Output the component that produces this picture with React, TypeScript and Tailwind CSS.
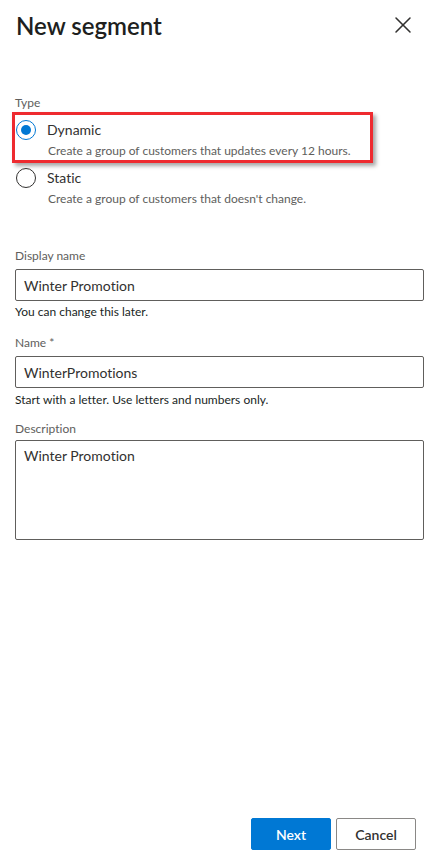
import { X } from "lucide-react";

const font = { fontFamily: "Lato, 'Open Sans', sans-serif" };

function Radio({ checked }: { checked?: boolean }) {
  return (
    <span
      className={`flex h-5 w-5 shrink-0 items-center justify-center rounded-full border ${
        checked ? "border-[#0078d4]" : "border-[#323130]"
      }`}
    >
      {checked && <span className="h-[10px] w-[10px] rounded-full bg-[#0078d4]" />}
    </span>
  );
}

function Option({ label, desc, checked }: { label: string; desc: string; checked?: boolean }) {
  return (
    <div>
      <div className="flex h-5 items-center gap-[11px]">
        <Radio checked={checked} />
        <span className="text-[14px] leading-5 text-[#323130]">{label}</span>
      </div>
      <p className="mt-[3px] whitespace-nowrap pl-[32px] text-[12px] leading-4 text-[#605e5c]">{desc}</p>
    </div>
  );
}

export default function App() {
  return (
    <div className="flex h-[862px] w-[445px] flex-col bg-white [font-variant-ligatures:none]" style={font}>
      <div className="flex h-[52px] items-start justify-between pl-4 pr-[28px] pt-[10px]">
        <h1 className="text-[24px] font-semibold leading-8 text-[#201f1e]">New segment</h1>
        <X className="mt-[1px] h-[28px] w-[28px] text-[#323130]" strokeWidth={1.3} />
      </div>

      <div className="flex-1 pl-[15px] pr-[21px]">
        <p className="mt-[43px] text-[12px] leading-4 text-[#605e5c]">Type</p>

        <div className="mt-[1px] w-[361px] -ml-[3px] border-[3px] border-[#ee2a2f] pb-[1px] pl-[1px] pt-[5px] shadow-[3px_3px_4px_rgba(0,0,0,0.35)]">
          <Option checked label="Dynamic" desc="Create a group of customers that updates every 12 hours." />
        </div>
        <div className="mt-[5px] pl-[1px]">
          <Option label="Static" desc="Create a group of customers that doesn't change." />
        </div>

        <label className="mt-[41px] block text-[12px] leading-4 text-[#605e5c]">Display name</label>
        <div className="mt-[5px] flex h-8 items-center rounded-[2px] border border-[#605e5c] px-2 text-[14px] text-[#323130]">
          Winter Promotion
        </div>
        <p className="mt-[3px] text-[12px] leading-4 text-[#201f1e]">You can change this later.</p>

        <label className="mt-[15px] block text-[12px] leading-4 text-[#605e5c]">Name *</label>
        <div className="mt-[5px] flex h-8 items-center rounded-[2px] border border-[#605e5c] px-2 text-[14px] text-[#323130]">
          WinterPromotions
        </div>
        <p className="mt-[4px] text-[12px] leading-4 text-[#201f1e]">
          Start with a letter. Use letters and numbers only.
        </p>

        <label className="mt-[13px] block text-[12px] leading-4 text-[#605e5c]">Description</label>
        <div className="mt-[3px] h-[100px] rounded-[2px] border border-[#605e5c] px-2 pt-[5px] text-[14px] leading-5 text-[#323130]">
          Winter Promotion
        </div>
      </div>

      <div className="flex justify-end gap-[5px] pb-[12px] pr-[29px]">
        <button className="h-8 w-[80px] rounded-[2px] border border-[#0078d4] bg-[#0078d4] text-[14px] font-semibold text-white">
          Next
        </button>
        <button className="h-8 w-[80px] rounded-[2px] border border-[#8a8886] bg-white text-[14px] font-semibold text-[#323130]">
          Cancel
        </button>
      </div>
    </div>
  );
}
